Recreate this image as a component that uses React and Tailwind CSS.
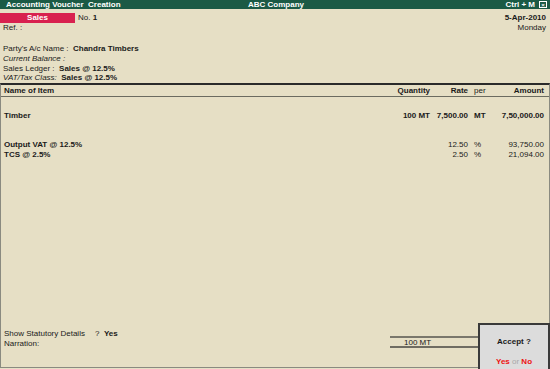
const Row = ({ name, qty, rate, per, amount, bold }) => (
  <div className={`flex h-[10px] leading-[10px] ${bold ? 'font-bold' : ''}`}>
    <div className="flex-1 pl-[3px] font-bold">{name}</div>
    <div className="w-[42px] text-right">{qty}</div>
    <div className="w-[38px] text-right">{rate}</div>
    <div className="w-[22px] pl-[6px]">{per}</div>
    <div className="w-[59px] pr-[5px] text-right">{amount}</div>
  </div>
);

export default function App() {
  return (
    <div
      className="relative w-[550px] h-[369px] overflow-hidden bg-[#e6dfc5] text-[8px] leading-[10px] text-[#1a1a1a] flex flex-col"
      style={{ fontFamily: '"Liberation Sans", Arial, sans-serif' }}
    >
      {/* Title bar */}
      <div className="h-[9px] bg-[#1b5a45] text-white font-bold flex items-center leading-[9px]">
        <div className="w-[248px] pl-[6px]">Accounting Voucher&nbsp; Creation</div>
        <div className="flex-1">ABC Company</div>
        <div className="pr-[4px]">Ctrl + M</div>
        <div className="w-[8px] h-[7px] mr-[3px] border border-white flex items-center justify-center text-[6px] leading-none">×</div>
      </div>

      {/* Voucher header */}
      <div className="flex justify-between mt-[4px]">
        <div>
          <div className="flex h-[10px] items-center">
            <div className="w-[75px] h-[10px] bg-[#d8214f] text-white font-bold text-center leading-[10px]">Sales</div>
            <div className="pl-[3px]">
              No. <span className="font-bold">1</span>
            </div>
          </div>
          <div className="pl-[3px] h-[9px] leading-[9px]">Ref. :</div>
        </div>
        <div className="text-right pr-[4px]">
          <div className="font-bold h-[10px] leading-[10px]">5-Apr-2010</div>
          <div className="h-[10px] leading-[10px]">Monday</div>
        </div>
      </div>

      <div className="pl-[3px] mt-[11px] flex flex-col">
        <div className="h-[10px] leading-[10px]">
          Party's A/c Name :&nbsp; <span className="font-bold">Chandra Timbers</span>
        </div>
        <div className="h-[10px] leading-[10px] italic">Current Balance :</div>
        <div className="h-[9px] leading-[9px]">
          Sales Ledger :&nbsp; <span className="font-bold">Sales @ 12.5%</span>
        </div>
        <div className="h-[10px] leading-[10px]">
          <span className="italic">VAT/Tax Class:</span>&nbsp; <span className="font-bold">Sales @ 12.5%</span>
        </div>
      </div>

      {/* Items table */}
      <div className="flex-1 flex flex-col border-t-2 border-t-[#2a2a2a] border-l border-l-[#8a8a80] border-r border-r-[#8a8a80] border-b border-b-[#8a8a80] mb-[1px]">
        <div className="border-b border-b-[#6b6b60] font-bold h-[12px] flex items-center">
          <div className="flex w-full h-[10px] leading-[10px]">
            <div className="flex-1 pl-[3px]">Name of Item</div>
            <div className="w-[42px] text-right">Quantity</div>
            <div className="w-[38px] text-right">Rate</div>
            <div className="w-[22px] pl-[6px] font-normal">per</div>
            <div className="w-[59px] pr-[5px] text-right">Amount</div>
          </div>
        </div>

        <div className="mt-[14px]">
          <Row name="Timber" qty="100 MT" rate="7,500.00" per="MT" amount="7,50,000.00" bold />
        </div>
        <div className="mt-[19px]">
          <Row name="Output VAT @ 12.5%" rate="12.50" per="%" amount="93,750.00" />
          <Row name="TCS @ 2.5%" rate="2.50" per="%" amount="21,094.00" />
        </div>

        <div className="flex-1" />

        {/* Footer */}
        <div className="flex items-end pb-[18px]">
          <div className="flex-1 pl-[3px]">
            <div className="h-[10px] leading-[10px] flex">
              <span className="w-[91px]">Show Statutory Details</span>
              <span>?&nbsp; <span className="font-bold">Yes</span></span>
            </div>
            <div className="h-[10px] leading-[10px]">Narration:</div>
          </div>
          <div className="w-[88px] mr-[71px] mb-[1px] border-t-2 border-t-[#7a776c] border-b-2 border-b-[#6f6c62] h-[12px] leading-[9px] pl-[14px]">
            100 MT
          </div>
        </div>
      </div>

      {/* Accept dialog */}
      <div className="absolute right-0 bottom-0 w-[72px] h-[46px] bg-[#dcdcdc] border-2 border-b-0 border-[#3a3a3a] flex flex-col items-center">
        <div className="mt-[12px] font-bold">Accept ?</div>
        <div className="mt-[10px] font-bold text-[#ee1111]">
          Yes <span className="text-[#a8a8a8] font-normal">or</span> No
        </div>
      </div>
    </div>
  );
}
